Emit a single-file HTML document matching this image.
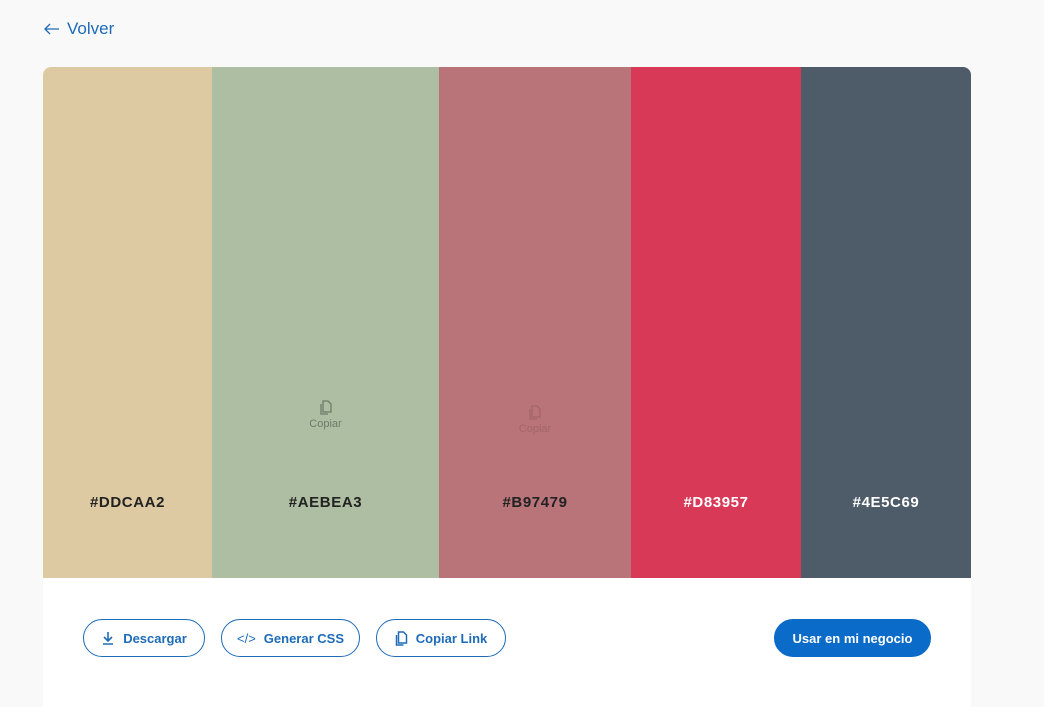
<!DOCTYPE html>
<html><head><meta charset="utf-8"><style>
body{margin:0;width:1044px;height:692px;background:#f9f9f9;font-family:"Liberation Sans",sans-serif;overflow:hidden;position:relative}
.back{position:absolute;left:43px;top:19px;color:#1e6bb8;font-size:17px;display:flex;align-items:center;gap:6px}
.card{position:absolute;left:43px;top:67px;width:928px;height:640px;background:#fff;border-radius:8px 8px 0 0;overflow:hidden}
.col{position:absolute;top:0;height:511px}
.hex{position:absolute;width:100%;top:427px;text-align:center;font-weight:bold;font-size:15px;letter-spacing:0.6px}
.cp{position:absolute;width:100%;text-align:center;font-size:11px}
.btn{position:absolute;top:619px;height:38px;border:1.5px solid #1e6bb8;border-radius:19px;color:#1e6bb8;font-size:13px;font-weight:bold;display:flex;align-items:center;justify-content:center;gap:8px;box-sizing:border-box}
</style></head><body>
<div class="back"><svg width="18" height="14" viewBox="0 0 18 14"><path d="M16 7H2M7 2L2 7l5 5" fill="none" stroke="#1e6bb8" stroke-width="1.3"/></svg>Volver</div>
<div class="card">
<div class="col" style="left:0;width:169px;background:#DDCAA2"><div class="hex" style="color:#222">#DDCAA2</div></div>
<div class="col" style="left:169px;width:227px;background:#AEBEA3">
<div class="cp" style="top:333px;color:#6f7a6a"><svg width="12" height="15" viewBox="0 0 12 15"><path d="M3 1h5l3 3v8H3z M1 4v10h7" fill="none" stroke="#6f7a6a" stroke-width="1.3"/></svg><br>Copiar</div>
<div class="hex" style="color:#222">#AEBEA3</div></div>
<div class="col" style="left:396px;width:192px;background:#B97479">
<div class="cp" style="top:338px;color:#a36469"><svg width="12" height="15" viewBox="0 0 12 15"><path d="M3 1h5l3 3v8H3z M1 4v10h7" fill="none" stroke="#a36469" stroke-width="1.3"/></svg><br>Copiar</div>
<div class="hex" style="color:#222">#B97479</div></div>
<div class="col" style="left:588px;width:170px;background:#D83957"><div class="hex" style="color:#fff">#D83957</div></div>
<div class="col" style="left:758px;width:170px;background:#4E5C69"><div class="hex" style="color:#fff">#4E5C69</div></div>
</div>
<div class="btn" style="left:83px;width:122px"><svg width="14" height="15" viewBox="0 0 14 15"><path d="M7 1v9M3 6l4 4 4-4M2 13h10" fill="none" stroke="#1e6bb8" stroke-width="1.6"/></svg>Descargar</div>
<div class="btn" style="left:221px;width:139px"><span style="font-weight:normal">&lt;/&gt;</span>Generar CSS</div>
<div class="btn" style="left:376px;width:130px"><svg width="13" height="15" viewBox="0 0 12 15"><path d="M3 1h5l3 3v8H3z M1 4v10h7" fill="none" stroke="#1e6bb8" stroke-width="1.5"/></svg>Copiar Link</div>
<div class="btn" style="left:774px;width:157px;background:#0a6bc9;border-color:#0a6bc9;color:#fff">Usar en mi negocio</div>
</body></html>
